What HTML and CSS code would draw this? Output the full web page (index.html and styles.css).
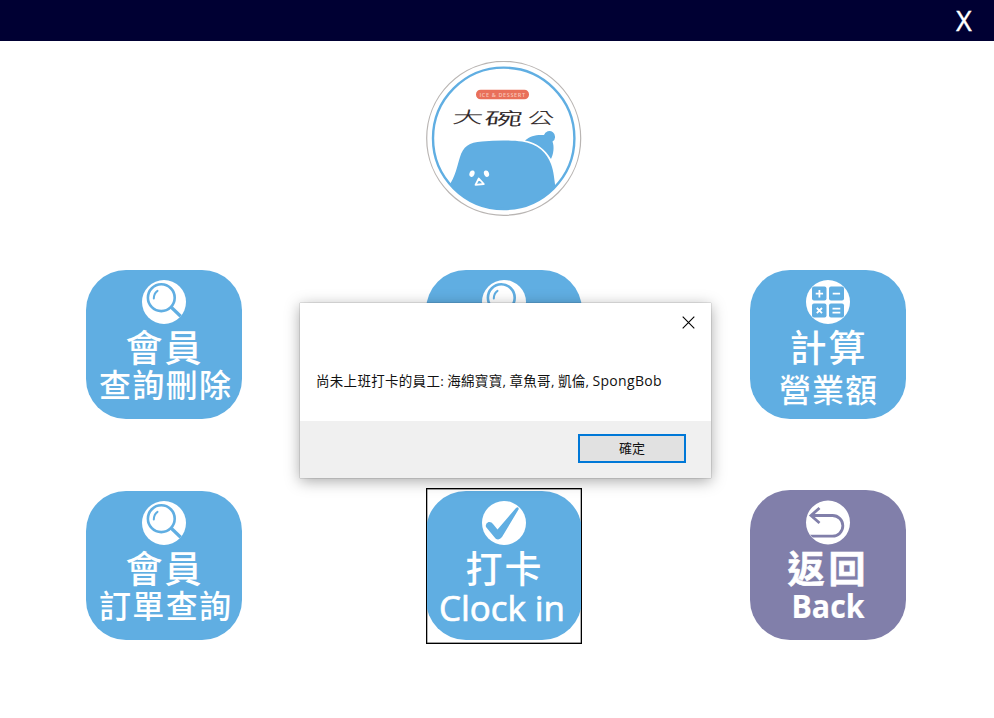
FILE: index.html
```html
<!DOCTYPE html>
<html lang="zh-Hant">
<head>
<meta charset="utf-8">
<title>大碗公</title>
<link rel="stylesheet" href="styles.css">
</head>
<body>
<svg class="defs" width="0" height="0" aria-hidden="true">
  <defs>
    <clipPath id="disc"><circle cx="78" cy="32" r="22"/></clipPath>
    <clipPath id="plate"><circle cx="77.7" cy="77.3" r="71"/></clipPath>
    <g id="search">
      <circle cx="78" cy="32" r="22" fill="#fff"/>
      <g clip-path="url(#disc)" fill="none" stroke="#60aee2">
        <circle cx="75.3" cy="27.7" r="13.4" stroke-width="2.6"/>
        <path d="M67.8 28.5Q68 23 71.5 20.8" stroke-width="2" stroke-linecap="round"/>
        <path d="M85 37L98 49.5" stroke-width="3.2"/>
      </g>
    </g>
  </defs>
</svg>

<header class="topbar"><button class="exit" type="button">X</button></header>

<main class="page">
  <svg class="logo" viewBox="0 0 156 156">
    <circle cx="77.7" cy="77.3" r="77" fill="#fff" stroke="#b9b5b3" stroke-width="1.2"/>
    <g clip-path="url(#plate)" fill="#60aee2">
      <path d="M22 126C30 115 31 105 34 96C37 86 43 81 56 80.5C70 79 85 79 96 80.5C112 83 121 92 125 103C128 111 128 117 129.5 126V156H22Z"/>
      <path d="M99 79.5C104 75 110 73.5 118 74A5.7 5.7 0 1 1 126.5 80.5C128.5 86 127.5 93 125 98C119 88 111 82 99 79.5Z"/>
    </g>
    <circle cx="77.7" cy="77.3" r="70.7" fill="none" stroke="#60aee2" stroke-width="2.4"/>
    <ellipse cx="46" cy="112.7" rx="2.5" ry="3.3" fill="#fff" transform="rotate(20 46 112.7)"/>
    <ellipse cx="60.5" cy="112.7" rx="2.5" ry="3.3" fill="#fff" transform="rotate(-20 60.5 112.7)"/>
    <path d="M52.8 117.5L49.5 123.8L57.8 123Z" fill="none" stroke="#fff" stroke-width="1.8" stroke-linejoin="round"/>
    <rect x="50" y="28.7" width="53" height="9.6" rx="4.6" fill="#e9705a"/>
    <text class="ribbon" x="53.5" y="35.6" textLength="45.5">ICE &amp; DESSERT</text>
    <g class="brand">
      <text transform="translate(26 62) skewX(-8) scale(1.9 1)">大</text>
      <text transform="translate(57.5 63.5) skewX(-8) scale(2.4 1.1)">碗</text>
      <text transform="translate(101 62.5) skewX(-8) scale(1.65 1)">公</text>
    </g>
  </svg>

  <div class="menu">
    <button class="tile" type="button">
      <svg class="art" viewBox="0 0 156 149">
        <use href="#search"/>
        <text class="zh big" x="39.5" y="92" textLength="76">會員</text>
        <text class="zh mid" x="13" y="127" textLength="132">查詢刪除</text>
      </svg>
    </button>
    <button class="tile" type="button">
      <svg class="art" viewBox="0 0 156 149">
        <use href="#search"/>
      </svg>
    </button>
    <button class="tile" type="button">
      <svg class="art" viewBox="0 0 156 149">
        <circle cx="78" cy="32" r="22" fill="#fff"/>
        <g clip-path="url(#disc)">
          <g fill="#60aee2">
            <rect x="62" y="16.5" width="14.5" height="14" rx="2"/>
            <rect x="79" y="16.5" width="15" height="14" rx="2"/>
            <rect x="62" y="33.5" width="14.5" height="14" rx="2"/>
            <rect x="79" y="33.5" width="15" height="14" rx="2"/>
          </g>
          <path d="M65.7 23.7h7.4M69.4 20v7.4M82.7 23.7h7.4M66.8 38l5.2 5.2M72 38l-5.2 5.2M82.5 38.7h7.8M82.5 42.7h7.8" stroke="#fff" stroke-width="1.8"/>
        </g>
        <text class="zh big" x="39.5" y="92" textLength="76">計算</text>
        <text class="zh mid" x="29" y="131.5" textLength="98">營業額</text>
      </svg>
    </button>
    <button class="tile" type="button">
      <svg class="art" viewBox="0 0 156 149">
        <use href="#search"/>
        <text class="zh big" x="39.5" y="92" textLength="76">會員</text>
        <text class="zh mid" x="13" y="127" textLength="132">訂單查詢</text>
      </svg>
    </button>
    <button class="tile focused" type="button">
      <svg class="art" viewBox="0 0 156 149">
        <circle cx="78" cy="32" r="22" fill="#fff"/>
        <path d="M60 36Q59 32.5 62.5 31Q65.5 30.5 67 33L71.5 38.5L90 17Q92.5 15 92.8 18L76 46Q73 50 69.5 47.5Z" fill="#60aee2"/>
        <text class="zh big" x="39.5" y="92" textLength="76">打卡</text>
        <text class="latin" x="13" y="130" textLength="126" lengthAdjust="spacingAndGlyphs">Clock in</text>
      </svg>
    </button>
    <button class="tile back" type="button">
      <svg class="art" viewBox="0 0 156 150">
        <circle cx="78" cy="32.5" r="22" fill="#fff"/>
        <g clip-path="url(#disc)" fill="none" stroke="#817faa" stroke-width="2.8">
          <path d="M61 25.5H82.5A10.3 10.3 0 0 1 82.5 46.2H59M69.5 18L61 25.5L69.5 33"/>
        </g>
        <text class="zh big bold" x="37.5" y="93" textLength="78">返回</text>
        <text class="latin semi" x="41.5" y="128" textLength="73" lengthAdjust="spacingAndGlyphs">Back</text>
      </svg>
    </button>
  </div>
</main>

<section class="dialog" role="dialog">
  <div class="dialog-body">
    <svg class="close" viewBox="0 0 13 13"><path d="M.7.7L12.3 12.3M12.3.7L.7 12.3"/></svg>
    <p class="message"><span class="han">尚未上班打卡的員工</span>: <span class="han">海綿寶寶</span>, <span class="han">章魚哥</span>, <span class="han">凱倫</span>, <span class="name">SpongBob</span></p>
  </div>
  <div class="dialog-foot"><button class="ok" type="button">確定</button></div>
</section>
</body>
</html>
```
FILE: styles.css
```css
* { box-sizing: border-box; }

body {
  margin: 0;
  width: 994px;
  height: 718px;
  overflow: hidden;
  background: #fff;
  font-family: "Open Sans", "Noto Sans CJK TC", sans-serif;
}

button {
  margin: 0;
  padding: 0;
  border: 0;
  font: inherit;
}

.defs { position: absolute; }

.topbar {
  display: flex;
  justify-content: flex-end;
  height: 41px;
  padding-right: 20px;
  background: #000033;
}

.exit {
  width: 20px;
  background: none;
  color: #fff;
  font-size: 27px;
  line-height: 39px;
  font-family: "Noto Sans", sans-serif;
  -webkit-text-stroke: .3px #fff;
}

.page {
  padding: 20px 88px 0 86px;
}

.logo {
  display: block;
  width: 156px;
  height: 156px;
  margin: 0 auto 50px 340px;
}

.ribbon {
  fill: #f8c5b8;
  font-size: 5.5px;
  font-weight: 600;
}

.brand {
  fill: #2b2324;
  stroke: #2b2324;
  stroke-width: .15px;
  font-family: "Noto Sans CJK TC", sans-serif;
  font-size: 16px;
  font-weight: 300;
}

.menu {
  display: grid;
  grid-template-columns: 340px 324px 156px;
  row-gap: 65px;
}

.tile {
  width: 156px;
  height: 156px;
  padding: 3px 0 4px;
  background: none;
}

.art {
  display: block;
  width: 156px;
  height: 149px;
  border-radius: 40px;
  background: #60aee2;
}

.focused {
  outline: 1px solid #000;
  outline-offset: -1px;
  box-shadow: inset 0 0 0 1.4px #444;
}

.back { padding-top: 2px; }
.back .art { height: 150px; background: #817faa; }

.zh {
  fill: #fff;
  font-family: "Noto Sans CJK TC", sans-serif;
  font-weight: 500;
}

.big { font-size: 37px; }
.mid { font-size: 32px; }

.bold {
  font-weight: 700;
  stroke: #fff;
  stroke-width: .6px;
}

.latin {
  fill: #fff;
  stroke: #fff;
  stroke-width: .7px;
  font-size: 34.5px;
}

.semi { font-weight: 700; font-size: 32.5px; stroke-width: .2px; }

.dialog {
  position: absolute;
  left: 300px;
  top: 303px;
  width: 411px;
  height: 175px;
  background: #fff;
  box-shadow: 0 0 1px rgba(0, 0, 0, .5), 0 3px 14px rgba(0, 0, 0, .35);
}

.dialog-body {
  display: flex;
  flex-direction: column;
  height: 118px;
  padding: 13px 16px 0 16px;
}

.close {
  width: 13px;
  height: 13px;
  align-self: flex-end;
  stroke: #000;
  stroke-width: 1.1;
}

.message {
  margin: 42px 0 0;
  font-size: 13.5px;
  line-height: 20px;
  white-space: nowrap;
  color: #111;
}

.han { letter-spacing: .3px; }
.name { font-size: 14px; letter-spacing: .3px; }

.dialog-foot {
  display: flex;
  justify-content: flex-end;
  height: 57px;
  padding: 13px 25px 0 0;
  background: #f0f0f0;
}

.ok {
  width: 108px;
  height: 29px;
  border: 2px solid #0078d7;
  background: #e1e1e1;
  color: #111;
  font-size: 13px;
  line-height: 23px;
}
```
